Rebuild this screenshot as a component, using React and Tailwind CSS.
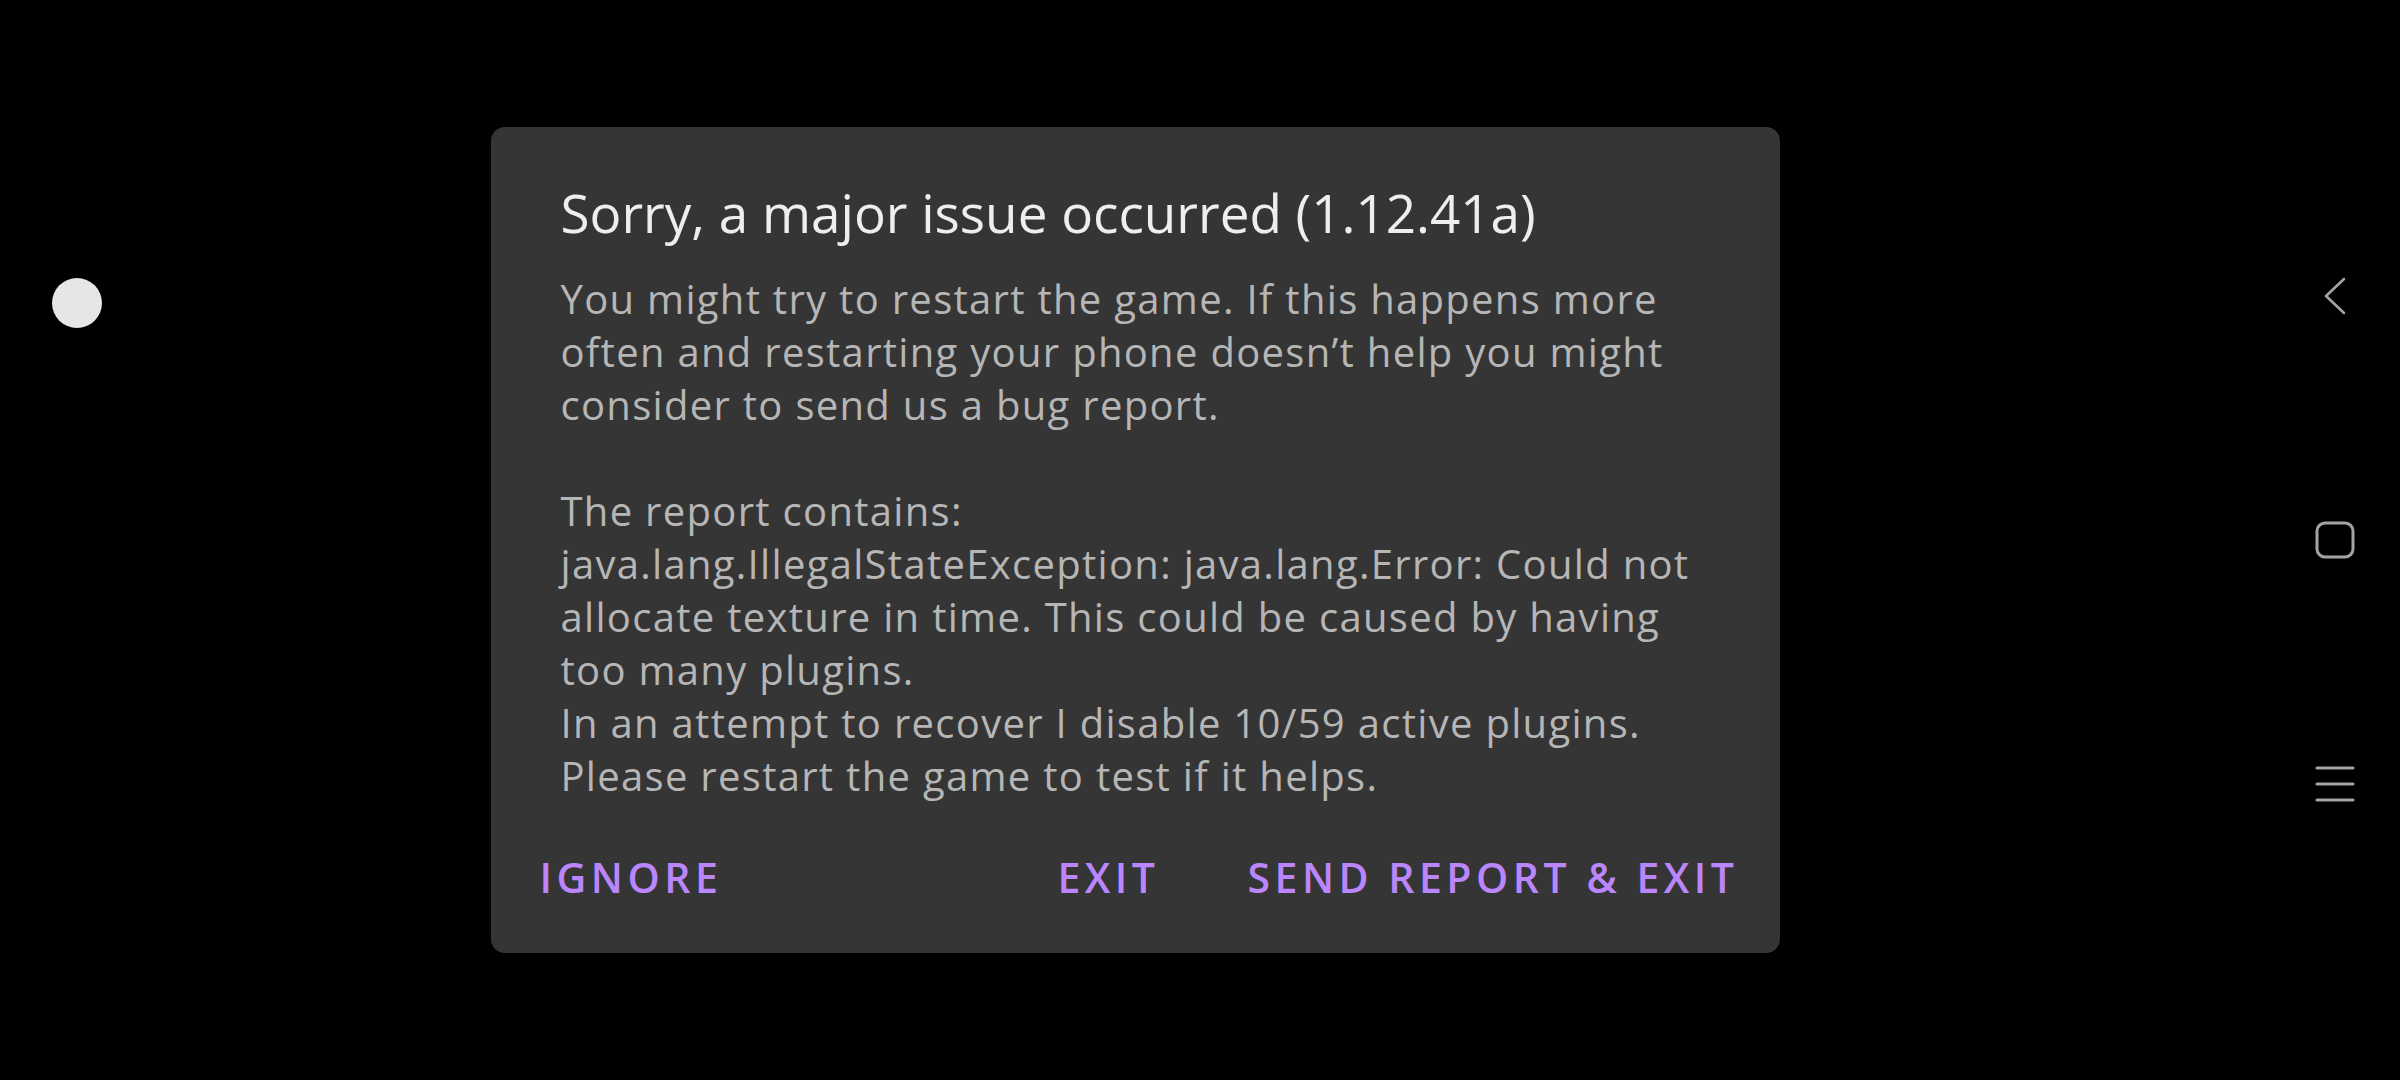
import React from "react";

const bodyFont = { fontFamily: "'Open Sans', 'Noto Sans', sans-serif" };

function NavBar() {
  return (
    <div className="flex w-[130px] flex-col items-center justify-center gap-[204px] text-[#a3a3a3]">
      <svg width="40" height="40" viewBox="0 0 40 40" fill="none" stroke="currentColor" strokeWidth="2.6" strokeLinecap="round" strokeLinejoin="round">
        <path d="M29 3 L11 20 L29 37" />
      </svg>
      <svg width="40" height="40" viewBox="0 0 40 40" fill="none" stroke="currentColor" strokeWidth="3">
        <rect x="2" y="3" width="36" height="34" rx="8" />
      </svg>
      <svg width="40" height="40" viewBox="0 0 40 40" fill="none" stroke="currentColor" strokeWidth="3" strokeLinecap="round">
        <path d="M2 4 H38 M2 20 H38 M2 36 H38" />
      </svg>
    </div>
  );
}

export default function App() {
  return (
    <div className="relative flex h-[1080px] w-[2400px] bg-black" style={bodyFont}>
      {/* floating assistive dot */}
      <div className="absolute left-[52px] top-[278px] h-[50px] w-[50px] rounded-full bg-[#e6e6e6]" />

      <div className="flex flex-1 items-center justify-center">
        <div className="w-[1289px] rounded-[14px] bg-[#353535] pt-[56px] pb-[49px]">
          <h2 className="px-[70px] text-[53px] leading-[60px] text-[#eeeeee]">
            Sorry, a major issue occurred (1.12.41a)
          </h2>
          <div className="mt-[29px] whitespace-pre-line pl-[70px] pr-[60px] text-[40px] leading-[53px] tracking-[1.3px] text-[#b6b6b6]">
            {"You might try to restart the game. If this happens more often and restarting your phone doesn’t help you might consider to send us a bug report.\n\nThe report contains:\njava.lang.IllegalStateException: java.lang.Error: Could not allocate texture in time. This could be caused by having too many plugins.\nIn an attempt to recover I disable 10/59 active plugins.\nPlease restart the game to test if it helps."}
          </div>
          <div className="mt-[49px] flex items-center pl-[46px] pr-[38px] text-[41px] leading-[53px] font-semibold tracking-[0.11em] text-[#bb86fc]">
            <button className="px-[3px]">IGNORE</button>
            <div className="flex-1" />
            <button className="px-[3px]">EXIT</button>
            <button className="ml-[82px] px-[3px]">SEND REPORT &amp; EXIT</button>
          </div>
        </div>
      </div>

      <NavBar />
    </div>
  );
}
